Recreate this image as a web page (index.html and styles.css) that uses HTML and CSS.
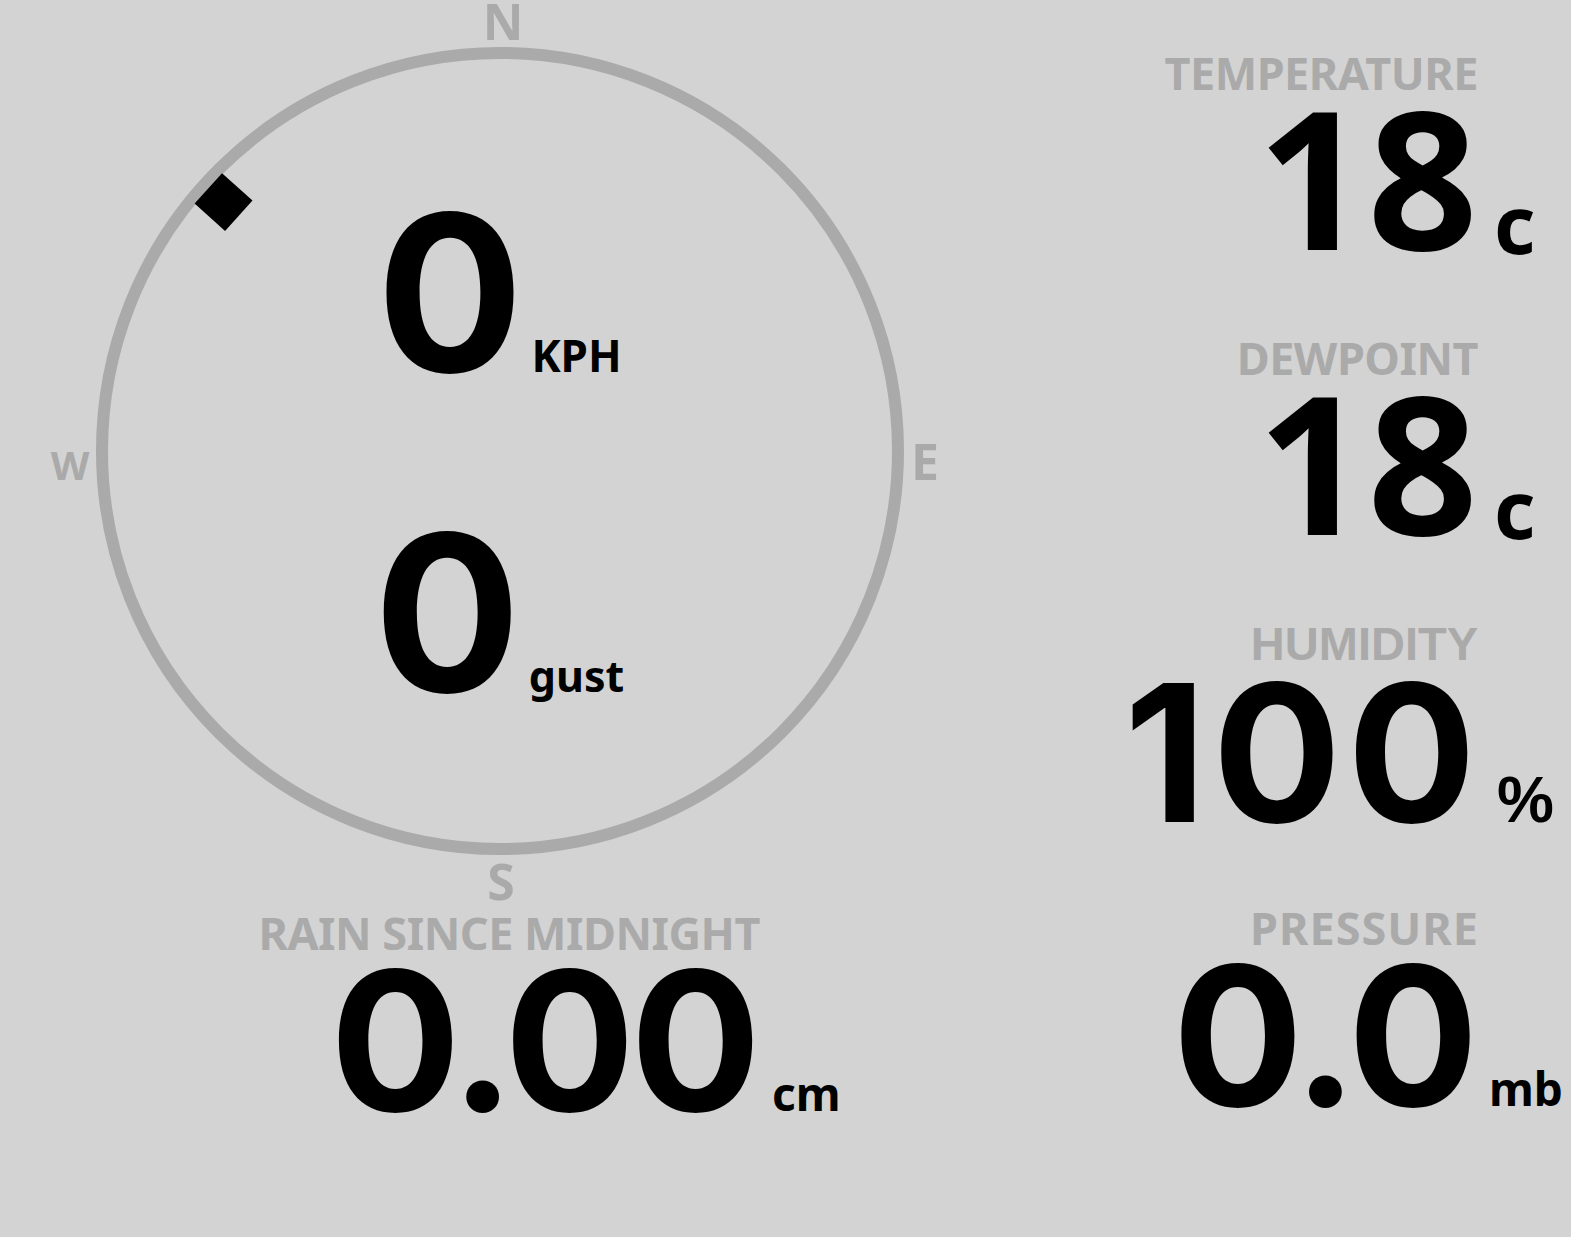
FILE: index.html
```html
<!DOCTYPE html>
<html lang="en">
<head>
<meta charset="utf-8">
<title>Weather</title>
<link rel="stylesheet" href="styles.css">
</head>
<body>
<div class="dash">
  <section class="left">
    <div class="compass">
      <svg class="dial" width="1000" height="905" viewBox="0 0 1000 905">
        <circle class="ring" cx="500" cy="451" r="398"/>
        <g transform="translate(500 451) rotate(312) translate(0 -372)">
          <rect class="pointer" x="-20.5" y="-20.5" width="41" height="41"/>
        </g>
        <text class="cardinal" x="503" y="40">N</text>
        <text class="cardinal" x="925" y="480">E</text>
        <text class="cardinal" x="501" y="900">S</text>
        <text class="cardinal west" x="70" y="480">W</text>
      </svg>
      <div class="wind">
        <div class="reading"><span class="wnum">0</span><span class="wunit">KPH</span></div>
        <div class="reading"><span class="wnum">0</span><span class="wunit gust">gust</span></div>
      </div>
    </div>
    <div class="stat rain">
      <div class="label">RAIN SINCE MIDNIGHT</div>
      <div class="value zero">0.00</div>
      <div class="unit small">cm</div>
    </div>
  </section>
  <section class="right">
    <div class="stat">
      <div class="label">TEMPERATURE</div>
      <div class="value">18</div>
      <div class="unit deg">c</div>
    </div>
    <div class="stat">
      <div class="label">DEWPOINT</div>
      <div class="value">18</div>
      <div class="unit deg">c</div>
    </div>
    <div class="stat hum">
      <div class="label">HUMIDITY</div>
      <div class="value">100</div>
      <div class="unit pct">%</div>
    </div>
    <div class="stat pres">
      <div class="label">PRESSURE</div>
      <div class="value zero">0.0</div>
      <div class="unit small">mb</div>
    </div>
  </section>
</div>
</body>
</html>
```

FILE: styles.css
```css
html, body {
  margin: 0;
  padding: 0;
}
body {
  background: #d3d3d3;
  color: #000;
  font-family: "Noto Sans", "Open Sans", sans-serif;
  font-weight: 700;
  width: 1571px;
  height: 1237px;
  overflow: hidden;
}
.dash {
  display: grid;
  grid-template-columns: 1000px 1fr;
}

/* compass */
.compass {
  display: grid;
  width: 1000px;
  height: 905px;
}
.compass > * {
  grid-area: 1 / 1;
}
.dial {
  display: block;
}
.ring {
  fill: none;
  stroke: #aaaaaa;
  stroke-width: 12;
}
.pointer {
  fill: #000;
}
.cardinal {
  font-family: "Noto Sans", sans-serif;
  font-weight: 700;
  font-size: 50px;
  fill: #aaaaaa;
  text-anchor: middle;
}
.cardinal.west {
  font-size: 40px;
}
.wind {
  display: flex;
  flex-direction: column;
  align-items: center;
  padding-top: 192px;
  gap: 118px;
}
.reading {
  display: flex;
  align-items: baseline;
  gap: 8px;
  padding-right: 2px;
}
.wnum {
  font-family: "Inter", "Noto Sans", sans-serif;
  font-weight: 700;
  font-size: 218px;
  line-height: 202px;
}
.wunit {
  font-family: "Noto Sans", sans-serif;
  font-size: 44px;
  line-height: 1;
}
.wunit.gust {
  font-size: 43px;
}

/* stats */
.stat {
  display: grid;
  grid-template-columns: 1fr 93px;
  align-items: baseline;
}
.label {
  grid-column: 1;
  justify-self: end;
  color: #aaaaaa;
  font-size: 45px;
  line-height: 45px;
  letter-spacing: -0.5px;
}
.value {
  grid-column: 1;
  justify-self: end;
  margin-top: 4px;
  font-size: 193px;
  line-height: 0.8;
}
.value.zero {
  font-family: "Inter", "Noto Sans", sans-serif;
  font-size: 194px;
  line-height: 163px;
  letter-spacing: -4.5px;
  margin-right: 4px;
}
.unit {
  grid-column: 2;
  padding-left: 12px;
  line-height: 1;
}
.unit.deg {
  font-size: 80px;
  line-height: 60px;
  padding-left: 16px;
  align-self: end;
}
.unit.small {
  font-size: 46px;
  padding-left: 11px;
}
.unit.pct {
  font-family: "Liberation Sans", Arial, sans-serif;
  font-size: 64px;
  padding-left: 19px;
}

.right {
  padding-top: 50px;
}
.right .stat {
  height: 285px;
  align-content: start;
}
.hum .label {
  font-family: "Liberation Sans", Arial, sans-serif;
  font-size: 47px;
  padding-top: 1px;
  letter-spacing: 0;
}
.hum .value {
  font-family: "Inter", "Noto Sans", sans-serif;
  font-size: 191px;
  line-height: 165px;
  letter-spacing: 6px;
  margin-right: -4px;
}
.pres .label {
  letter-spacing: 1px;
  margin-right: -1px;
}

.rain {
  margin-top: 5px;
  grid-template-columns: 760px 1fr;
}
.rain .value.zero {
  letter-spacing: -5px;
}
.rain .unit {
  padding-left: 12px;
}
```
